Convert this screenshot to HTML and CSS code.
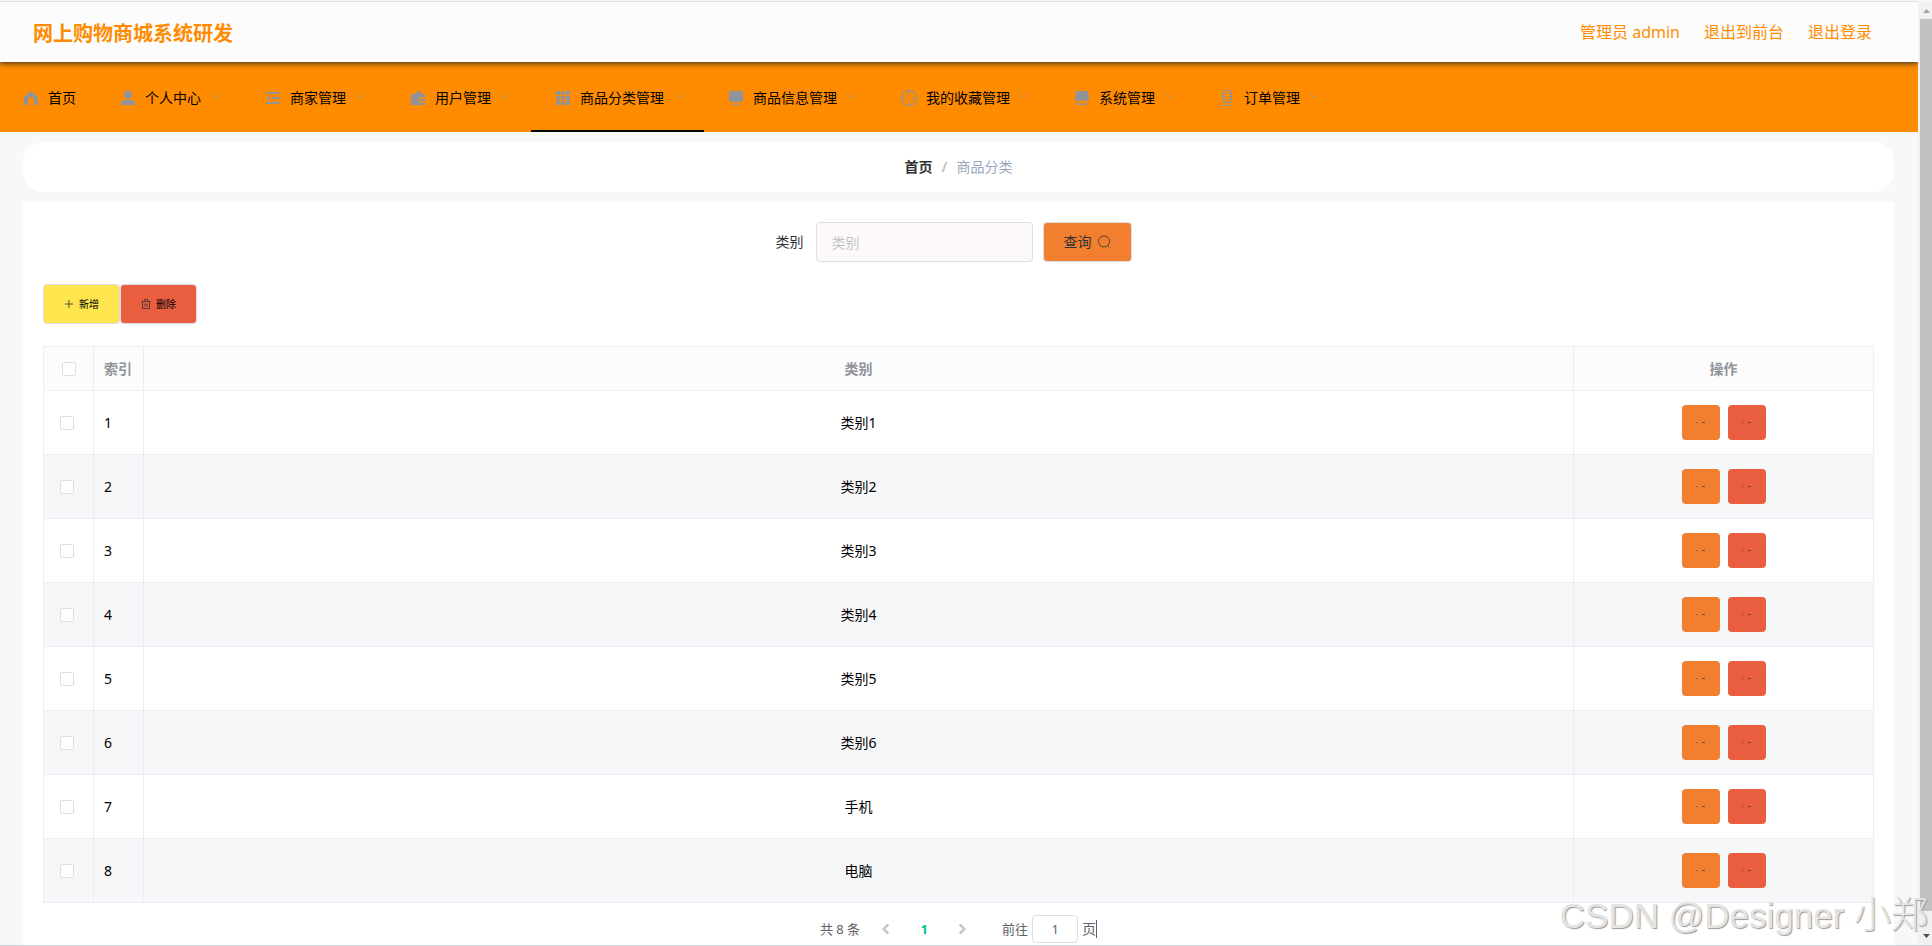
FILE: index.html
```html
<!DOCTYPE html>
<html lang="zh-CN">
<head>
<meta charset="utf-8">
<title>网上购物商城系统研发</title>
<link rel="stylesheet" href="styles.css">
</head>
<body>
<div class="page">
  <header class="topbar">
    <h1 class="brand">网上购物商城系统研发</h1>
    <div class="account">
      <span>管理员 admin</span>
      <a href="#">退出到前台</a>
      <a href="#">退出登录</a>
    </div>
  </header>

  <nav class="menu">
    <a class="menu-item" href="#"><svg class="icon" viewBox="0 0 18 18"><path d="M9 2 16 8v8h-4v-5a3 3 0 0 0-6 0v5H2V8z" fill="currentColor"/></svg><span>首页</span></a>
    <a class="menu-item" href="#"><svg class="icon" viewBox="0 0 18 18"><path d="M9 1.500a4 4 0 1 1 0 8.500 4.200 4.200 0 0 1 0-8.500zM6 11h6a4 4 0 0 1 4 4v1H2v-1a4 4 0 0 1 4-4z" fill="currentColor"/></svg><span>个人中心</span><svg class="arrow" viewBox="0 0 12 12"><path d="M1.500 3.500 6 8l4.500-4.500"/></svg></a>
    <a class="menu-item" href="#"><svg class="icon" viewBox="0 0 18 18"><path d="M2 3h14v2H2zM8 8h8v2H8zM2 13h14v2H2zM6 6.500v5L2.500 9z" fill="currentColor"/></svg><span>商家管理</span><svg class="arrow" viewBox="0 0 12 12"><path d="M1.500 3.500 6 8l4.500-4.500"/></svg></a>
    <a class="menu-item" href="#"><svg class="icon" viewBox="0 0 18 18"><path d="M2 5h4l4.500-3.500L13 5h3v3h-4a2.800 2.800 0 0 0 0 5.500h4V16H2zM12.500 9.200H16v3h-3.500a1.500 1.500 0 0 1 0-3z" fill="currentColor"/></svg><span>用户管理</span><svg class="arrow" viewBox="0 0 12 12"><path d="M1.500 3.500 6 8l4.500-4.500"/></svg></a>
    <a class="menu-item active" href="#"><svg class="icon" viewBox="0 0 18 18"><path d="M2 2h4v4H2zM7 2h4v4H7zM12 2h4v4h-4zM2 7h4v4H2zM7 7h4v4H7zM12 7h4v4h-4zM2 12h4v4H2zM7 12h4v4H7zM12 12h4v4h-4z" fill="currentColor"/></svg><span>商品分类管理</span><svg class="arrow" viewBox="0 0 12 12"><path d="M1.500 3.500 6 8l4.500-4.500"/></svg></a>
    <a class="menu-item" href="#"><svg class="icon" viewBox="0 0 18 18"><path d="M2 2h14v11H2zM7.500 14h3v1H13v1H5v-1h2.500z" fill="currentColor"/></svg><span>商品信息管理</span><svg class="arrow" viewBox="0 0 12 12"><path d="M1.500 3.500 6 8l4.500-4.500"/></svg></a>
    <a class="menu-item" href="#"><svg class="icon" viewBox="0 0 18 18"><circle cx="9" cy="9" r="7.500" fill="none" stroke="currentColor" stroke-width="1.200"/><path d="M9 1.500v5M9 11.500v5M1.500 9h5M11.500 9h5" stroke="currentColor" stroke-width="1.200"/></svg><span>我的收藏管理</span><svg class="arrow" viewBox="0 0 12 12"><path d="M1.500 3.500 6 8l4.500-4.500"/></svg></a>
    <a class="menu-item" href="#"><svg class="icon" viewBox="0 0 18 18"><path d="M3 2h12l1 8a1.500 1.500 0 0 1-1.500 1.500H14l-1 .5-2-.5-2 .5-2-.5-2 .5-1-.5h-.5A1.500 1.500 0 0 1 2 10zM4 12.500h1.500v2h7v-2H14V16H4z" fill="currentColor"/></svg><span>系统管理</span><svg class="arrow" viewBox="0 0 12 12"><path d="M1.500 3.500 6 8l4.500-4.500"/></svg></a>
    <a class="menu-item" href="#"><svg class="icon" viewBox="0 0 18 18"><rect x="4.500" y="1.500" width="9" height="12" rx="3" fill="none" stroke="currentColor" stroke-width="1.200"/><path d="M5 4.500h3M10 4.500h3M5 7.500h3M10 7.500h3M5 10.500h3M10 10.500h3M9 14v2.500M4 16.500h10" stroke="currentColor"/></svg><span>订单管理</span><svg class="arrow" viewBox="0 0 12 12"><path d="M1.500 3.500 6 8l4.500-4.500"/></svg></a>
  </nav>

  <main class="content">
    <div class="crumbs">
      <a class="crumb-home" href="#">首页</a><span class="crumb-sep">/</span><span>商品分类</span>
    </div>

    <section class="panel">
      <form class="search">
        <label for="category">类别</label>
        <input class="search-input" id="category" type="text" placeholder="类别">
        <button class="btn btn-search" type="button">查询<svg class="icon-lens" viewBox="0 0 14 14"><circle cx="7" cy="6.500" r="5.500"/><path d="m10.500 10.500 2 2"/></svg></button>
      </form>

      <div class="tools">
        <button class="btn btn-add" type="button"><svg class="icon-small" viewBox="0 0 10 10"><path d="M5 1v8M1 5h8"/></svg>新增</button>
        <button class="btn btn-remove" type="button"><svg class="icon-small" viewBox="0 0 10 10"><path d="M.5 2.500h9M3.500 2V.5h3V2M1.500 2.500v7h7v-7M4 4.500v3M6 4.500v3"/></svg>删除</button>
      </div>

      <table class="grid">
        <colgroup><col class="col-check"><col class="col-index"><col><col class="col-actions"></colgroup>
        <thead>
          <tr><th><input class="check" type="checkbox" aria-label="全选"></th><th class="index">索引</th><th>类别</th><th>操作</th></tr>
        </thead>
        <tbody id="rows"></tbody>
      </table>

      <div class="pager">
        <span class="total">共 8 条</span>
        <div class="pages">
          <button class="page-btn" type="button" aria-label="上一页"><svg class="chev" viewBox="0 0 12 12"><path d="M8 2 4 6l4 4"/></svg></button>
          <button class="page-btn current" type="button">1</button>
          <button class="page-btn" type="button" aria-label="下一页"><svg class="chev" viewBox="0 0 12 12"><path d="m4 2 4 4-4 4"/></svg></button>
        </div>
        <label for="jump">前往</label>
        <input class="jump" id="jump" type="text" value="1">
        <span class="unit">页</span>
      </div>
    </section>
  </main>
</div>

<div class="scrollbar">
  <svg class="scroll-arrow up" viewBox="0 0 14 17"><path d="m5 11 3.500-4 3.500 4z"/></svg>
  <div class="thumb"></div>
  <svg class="scroll-arrow down" viewBox="0 0 14 34"><path d="m5 23 3.500 4 3.500-4z"/></svg>
</div>
<div class="watermark">CSDN @Designer <span class="watermark-name">小郑</span></div>
<script src="app.js"></script>
</body>
</html>
```
FILE: styles.css
```css
* { box-sizing: border-box; }

body {
  margin: 0;
  height: 100vh;
  overflow: hidden;
  display: flex;
  position: relative;
  border-bottom: 1px solid #ccd0d3;
  background: #f7f8fa;
  color: #000;
  font: 14px/20px "Noto Sans", "Noto Sans CJK SC", sans-serif;
}

a { color: inherit; text-decoration: none; }

button, input { font: inherit; }

.page {
  flex: 1;
  min-width: 0;
  margin-top: 1px;
  border-top: 1px solid #e0e0e0;
}

/* Header */
.topbar {
  position: relative;
  z-index: 1;
  display: flex;
  align-items: center;
  justify-content: space-between;
  height: 60px;
  padding: 0 46px 0 33px;
  background: #fcfcfc;
  box-shadow: 0 1px 6px #222;
  clip-path: inset(0 0 -12px 0);
  color: #ff8c00;
}

.brand { margin: 0; padding-top: 3px; font-size: 20px; line-height: 28px; font-weight: 700; }

.account { display: flex; gap: 24px; font-size: 16px; }

/* Main menu */
.menu {
  display: flex;
  height: 70px;
  padding: 0 19px;
  background: #ff8c00;
}

.menu-item {
  display: flex;
  align-items: center;
  padding: 4px 20px 0;
  border-bottom: 2px solid transparent;
  white-space: nowrap;
}

.menu-item:first-child { padding-left: 0; }

.menu-item.active { border-bottom-color: #000; }

.icon { width: 18px; height: 18px; margin: 0 8px 0 3px; color: #909399; }

.arrow {
  width: 12px;
  height: 12px;
  margin: 0 0 4px 8px;
  fill: none;
  stroke: #b59a6c;
}

/* Content */
.content { padding: 10px 24px 0 23px; }

.crumbs {
  display: flex;
  align-items: center;
  justify-content: center;
  height: 50px;
  margin-bottom: 10px;
  border-radius: 20px;
  background: #fff;
  color: #97a8be;
}

.crumb-home { color: #303133; font-weight: 700; }
.crumb-sep { margin: 0 9px; color: #c0c4cc; font-weight: 700; }

.panel { padding: 20px 20px 40px; background: #fff; }

.search {
  display: flex;
  align-items: center;
  justify-content: center;
  padding-right: 10px;
  color: #303133;
}

.search-input {
  width: 217px;
  height: 40px;
  margin: 0 10px 0 12px;
  padding: 0 15px;
  border: 1px solid #dcdfe6;
  border-radius: 4px;
  background: #fdf9f8;
}

.search-input::placeholder { color: #c0c4cc; }

.btn {
  display: flex;
  align-items: center;
  justify-content: center;
  height: 40px;
  padding: 0;
  border: 1px solid #dcdfe6;
  border-radius: 4px;
}

.btn svg { fill: none; stroke: #333; stroke-width: .8; }

.btn-search { width: 89px; background: #f27e30; color: #303133; }
.icon-lens { width: 14px; height: 14px; margin-left: 5px; }

.tools { display: flex; margin: 22px 0; }
.btn-add, .btn-remove { width: 77px; font-size: 10px; color: #000; }
.btn-add { background: #fee44d; }
.btn-remove { background: #ea5e40; }
.icon-small { width: 10px; height: 10px; margin-right: 5px; }

/* Table */
.grid {
  width: 100%;
  table-layout: fixed;
  border-spacing: 0;
  border: solid #ebeef5;
  border-width: 1px 0 0 1px;
  text-align: center;
}

.col-check, .col-index { width: 50px; }
.col-actions { width: 300px; }

.grid th, .grid td {
  padding: 0;
  border: solid #ebeef5;
  border-width: 0 1px 1px 0;
}

.grid th { height: 44px; background: #fcfcfc; color: #909399; font-weight: 700; }
.grid td { height: 64px; }
.grid tbody tr:nth-child(even) { background: #f5f7f9; }
.grid .index { padding-left: 10px; text-align: left; }
.grid .select { padding-left: 16px; }

.check {
  display: block;
  width: 14px;
  height: 14px;
  margin: 0;
  appearance: none;
  border: 1px solid #dcdfe6;
  border-radius: 2px;
  background: #fff;
}

th .check { margin: 0 auto; }

.actions { display: flex; justify-content: center; gap: 8px; }

.action {
  display: flex;
  align-items: center;
  justify-content: center;
  width: 38px;
  height: 35px;
  padding: 0;
  border: 0;
  border-radius: 4px;
}

.action.edit { background: #f27e30; }
.action.delete { background: #ea5e40; }
.action svg { width: 10px; height: 1px; fill: #333; }

/* Pagination */
.pager {
  display: flex;
  align-items: center;
  justify-content: center;
  margin-top: 12px;
  color: #606266;
  font-size: 13px;
}

.pages { display: flex; gap: 8px; margin: 0 25px 0 11px; }

.page-btn {
  display: flex;
  align-items: center;
  justify-content: center;
  width: 30px;
  height: 28px;
  padding: 0;
  border: 0;
  background: none;
}

.page-btn.current { color: #00c292; font-weight: 700; }
.chev { width: 14px; height: 14px; fill: none; stroke: #c0c4cc; stroke-width: 2; }

.jump {
  width: 46px;
  height: 28px;
  margin: 0 4px;
  padding: 0 3px;
  border: 1px solid #dcdfe6;
  border-radius: 4px;
  color: #606266;
  text-align: center;
}

.unit { border-right: 1px solid #606266; font-size: 14px; line-height: 18px; }

/* Scroll bar */
.scrollbar {
  display: flex;
  flex-direction: column;
  width: 14px;
  margin-top: 2px;
  background: #f1f1f1;
}

.thumb { flex: 1; margin-left: 2px; background: #c1c1c1; }
.scroll-arrow { flex: none; width: 14px; fill: #505050; }
.up { height: 17px; fill: #a3a3a3; }
.down { height: 34px; }

.watermark {
  position: absolute;
  right: 4px;
  bottom: 2px;
  color: #e4e4e4;
  font: 300 35px/54px "Liberation Sans", "Noto Sans CJK SC", sans-serif;
  text-shadow: 1px 1px 1px #999;
  white-space: nowrap;
}

.watermark-name { font-size: 37px; }
```
FILE: app.js
```js
const categories = ["类别1", "类别2", "类别3", "类别4", "类别5", "类别6", "手机", "电脑"];
const mark = '<svg viewBox="0 0 10 1"><path d="M0 0h2v1H0z" opacity=".3"/><path d="M6 0h3v1H6z" opacity=".7"/></svg>';

document.getElementById("rows").innerHTML = categories.map((name, i) => `
  <tr>
    <td class="select"><input class="check" type="checkbox" aria-label="选择${name}"></td>
    <td class="index">${i + 1}</td>
    <td>${name}</td>
    <td><div class="actions">
      <button class="action edit" type="button" aria-label="修改">${mark}</button>
      <button class="action delete" type="button" aria-label="删除">${mark}</button>
    </div></td>
  </tr>`).join("");
```
